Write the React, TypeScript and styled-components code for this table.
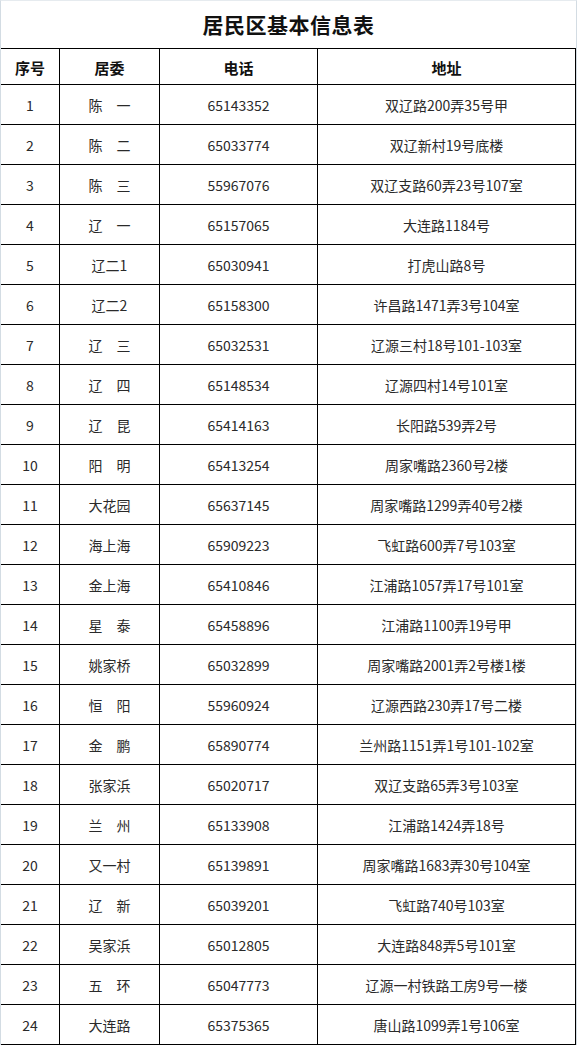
import React from "react";
import styled, { createGlobalStyle } from "styled-components";

const GlobalStyle = createGlobalStyle`
  html, body {
    margin: 0;
    padding: 0;
    background: #ffffff;
  }
  body {
    font-family: "Noto Sans CJK SC", "Liberation Sans", sans-serif;
  }
`;

interface Resident {
  no: number;
  committee: string;
  phone: string;
  address: string;
}

const rows: Resident[] = [
  { no: 1, committee: "陈　一", phone: "65143352", address: "双辽路200弄35号甲" },
  { no: 2, committee: "陈　二", phone: "65033774", address: "双辽新村19号底楼" },
  { no: 3, committee: "陈　三", phone: "55967076", address: "双辽支路60弄23号107室" },
  { no: 4, committee: "辽　一", phone: "65157065", address: "大连路1184号" },
  { no: 5, committee: "辽二1", phone: "65030941", address: "打虎山路8号" },
  { no: 6, committee: "辽二2", phone: "65158300", address: "许昌路1471弄3号104室" },
  { no: 7, committee: "辽　三", phone: "65032531", address: "辽源三村18号101-103室" },
  { no: 8, committee: "辽　四", phone: "65148534", address: "辽源四村14号101室" },
  { no: 9, committee: "辽　昆", phone: "65414163", address: "长阳路539弄2号" },
  { no: 10, committee: "阳　明", phone: "65413254", address: "周家嘴路2360号2楼" },
  { no: 11, committee: "大花园", phone: "65637145", address: "周家嘴路1299弄40号2楼" },
  { no: 12, committee: "海上海", phone: "65909223", address: "飞虹路600弄7号103室" },
  { no: 13, committee: "金上海", phone: "65410846", address: "江浦路1057弄17号101室" },
  { no: 14, committee: "星　泰", phone: "65458896", address: "江浦路1100弄19号甲" },
  { no: 15, committee: "姚家桥", phone: "65032899", address: "周家嘴路2001弄2号楼1楼" },
  { no: 16, committee: "恒　阳", phone: "55960924", address: "辽源西路230弄17号二楼" },
  { no: 17, committee: "金　鹏", phone: "65890774", address: "兰州路1151弄1号101-102室" },
  { no: 18, committee: "张家浜", phone: "65020717", address: "双辽支路65弄3号103室" },
  { no: 19, committee: "兰　州", phone: "65133908", address: "江浦路1424弄18号" },
  { no: 20, committee: "又一村", phone: "65139891", address: "周家嘴路1683弄30号104室" },
  { no: 21, committee: "辽　新", phone: "65039201", address: "飞虹路740号103室" },
  { no: 22, committee: "吴家浜", phone: "65012805", address: "大连路848弄5号101室" },
  { no: 23, committee: "五　环", phone: "65047773", address: "辽源一村铁路工房9号一楼" },
  { no: 24, committee: "大连路", phone: "65375365", address: "唐山路1099弄1号106室" },
];

const Sheet = styled.div`
  width: 577px;
  box-sizing: border-box;
  border-left: 1px solid #d3dce3;
  border-right: 1px solid #d3dce3;
  border-top: 1px solid #e6ebef;
  background: #ffffff;
`;

const Title = styled.h1`
  margin: 0;
  height: 47px;
  display: flex;
  align-items: center;
  justify-content: center;
  font-size: 21px;
  font-weight: 700;
  color: #111111;
  letter-spacing: 0.5px;
  padding-bottom: 2px;
  box-sizing: border-box;
`;

const Row = styled.div<{ $header?: boolean }>`
  display: grid;
  grid-template-columns: 59px 100px 158px 258px;
  height: ${(p) => (p.$header ? "37px" : "40px")};
  box-sizing: border-box;
  border-top: ${(p) => (p.$header ? "1px solid #000" : "none")};
  border-bottom: 1px solid #000;
`;

const Cell = styled.div<{ $header?: boolean }>`
  display: flex;
  align-items: center;
  justify-content: center;
  box-sizing: border-box;
  border-right: 1px solid #000;
  font-size: ${(p) => (p.$header ? "15px" : "14px")};
  font-weight: ${(p) => (p.$header ? 700 : 400)};
  color: ${(p) => (p.$header ? "#111" : "#2a2a2a")};
  white-space: nowrap;
  padding-top: 1px;
`;

export default function App() {
  return (
    <>
      <GlobalStyle />
      <Sheet>
        <Title>居民区基本信息表</Title>
        <Row $header>
          <Cell $header>序号</Cell>
          <Cell $header>居委</Cell>
          <Cell $header>电话</Cell>
          <Cell $header>地址</Cell>
        </Row>
        {rows.map((r) => (
          <Row key={r.no}>
            <Cell>{r.no}</Cell>
            <Cell>{r.committee}</Cell>
            <Cell>{r.phone}</Cell>
            <Cell>{r.address}</Cell>
          </Row>
        ))}
      </Sheet>
    </>
  );
}
